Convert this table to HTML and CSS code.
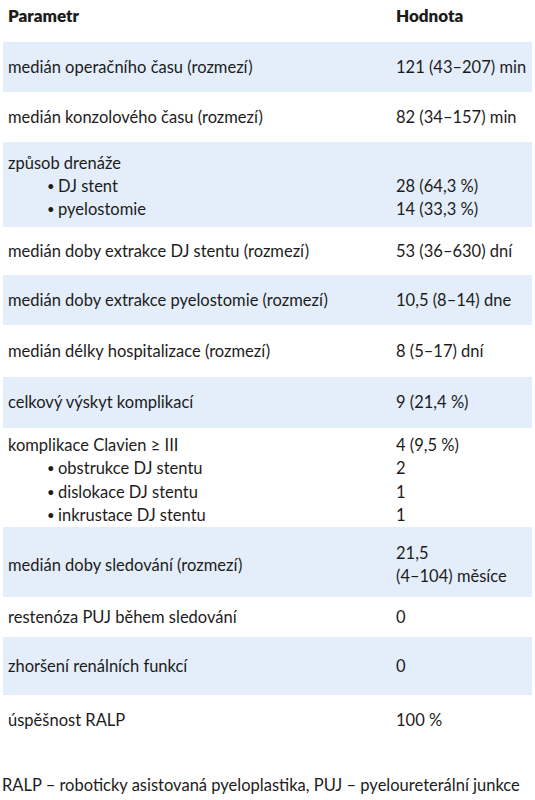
FILE: index.html
```html
<!DOCTYPE html>
<html lang="cs">
<head>
  <meta charset="UTF-8" />
  <meta name="viewport" content="width=device-width, initial-scale=1.0"/>
  <title>Výsledky RALP</title>
  <link rel="stylesheet" href="styles.css">
</head>
<body>
  <table class="tabulka">
    <thead>
      <tr class="hlavicka">
        <th class="param">Parametr</th>
        <th class="hodnota">Hodnota</th>
      </tr>
    </thead>
    <tbody>
      <tr class="stin r50">
        <td>medián operačního času (rozmezí)</td>
        <td>121 (43–207) min</td>
      </tr>
      <tr class="r50">
        <td>medián konzolového času (rozmezí)</td>
        <td>82 (34–157) min</td>
      </tr>
      <tr class="stin r85">
        <td>
          způsob drenáže
          <ul>
            <li>DJ stent</li>
            <li>pyelostomie</li>
          </ul>
        </td>
        <td><br>28 (64,3 %)<br>14 (33,3 %)</td>
      </tr>
      <tr class="r48">
        <td>medián doby extrakce DJ stentu (rozmezí)</td>
        <td>53 (36–630) dní</td>
      </tr>
      <tr class="stin r50">
        <td>medián doby extrakce pyelostomie (rozmezí)</td>
        <td>10,5 (8–14) dne</td>
      </tr>
      <tr class="r52">
        <td>medián délky hospitalizace (rozmezí)</td>
        <td>8 (5–17) dní</td>
      </tr>
      <tr class="stin r51">
        <td>celkový výskyt komplikací</td>
        <td>9 (21,4 %)</td>
      </tr>
      <tr class="r97">
        <td>
          komplikace Clavien ≥ III
          <ul>
            <li>obstrukce DJ stentu</li>
            <li>dislokace DJ stentu</li>
            <li>inkrustace DJ stentu</li>
          </ul>
        </td>
        <td>4 (9,5 %)<br>2<br>1<br>1</td>
      </tr>
      <tr class="stin r71">
        <td>medián doby sledování (rozmezí)</td>
        <td>21,5<br>(4–104) měsíce</td>
      </tr>
      <tr class="r40">
        <td>restenóza PUJ během sledování</td>
        <td>0</td>
      </tr>
      <tr class="stin r58">
        <td>zhoršení renálních funkcí</td>
        <td>0</td>
      </tr>
      <tr class="r50">
        <td>úspěšnost RALP</td>
        <td>100 %</td>
      </tr>
    </tbody>
  </table>

  <p class="poznamka">RALP – roboticky asistovaná pyeloplastika, PUJ – pyeloureterální junkce</p>
</body>
</html>
```

FILE: styles.css
```css
* {
  margin: 0;
  padding: 0;
  box-sizing: border-box;
}

body {
  background-color: #ffffff;
  color: #1c1c1c;
  font-family: Lato, 'Noto Sans', sans-serif;
  font-size: 16.5px;
  line-height: 23px;
}

.tabulka {
  margin-left: 3px;
  width: 529px;
  border-collapse: collapse;
}

.tabulka th {
  text-align: left;
  font-weight: 800;
  font-size: 17px;
  vertical-align: top;
  padding: 4px 5px 15px 5px;
  height: 42px;
}

.tabulka .param {
  width: 388px;
}

.tabulka td {
  padding: 0 5px;
  vertical-align: middle;
}

.stin {
  background-color: #e3eefa;
}

.tabulka ul {
  list-style: none;
}

.tabulka li {
  padding-left: 50px;
  position: relative;
}

.tabulka li::before {
  content: "•";
  font-size: 13px;
  position: absolute;
  left: 39px;
}

.r85 td {
  padding-top: 3px;
}

.r97 td {
  padding-top: 6px;
  line-height: 23.3px;
}

.r40 { height: 40px; }
.r48 { height: 48px; }
.r50 { height: 50px; }
.r51 { height: 51px; }
.r52 { height: 52px; }
.r58 { height: 58px; }
.r71 { height: 70px; }
.r85 { height: 85px; }
.r97 { height: 98px; }

.r71 td {
  padding-top: 6px;
}

.poznamka {
  margin-top: 29px;
  padding-left: 2px;
}
```
